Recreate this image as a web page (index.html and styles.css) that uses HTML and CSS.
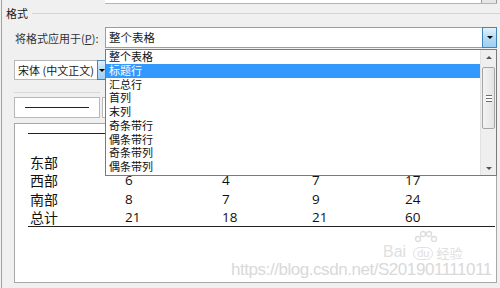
FILE: index.html
```html
<!DOCTYPE html>
<html lang="zh-CN">
<head>
    <meta charset="UTF-8">
    <title>格式</title>
    <link rel="stylesheet" href="styles.css">
</head>
<body>
    <div class="dialog">
        <div class="top-combo">
            <div class="top-combo-field"></div>
            <div class="top-combo-btn"></div>
        </div>

        <div class="section-title">
            <span>格式</span>
            <div class="section-line"></div>
        </div>

        <div class="apply-row">
            <label class="apply-label">将格式应用于(<u>P</u>):</label>
            <div class="combo-wrap">
                <div class="combo">
                    <div class="combo-text">整个表格</div>
                    <div class="drop-btn drop-btn-big"><span class="tri"></span></div>
                </div>
                <!-- 展开的下拉列表 -->
                <div class="drop-list">
                    <div class="drop-items">
                        <div class="drop-item">整个表格</div>
                        <div class="drop-item selected">标题行</div>
                        <div class="drop-item">汇总行</div>
                        <div class="drop-item">首列</div>
                        <div class="drop-item">末列</div>
                        <div class="drop-item">奇条带行</div>
                        <div class="drop-item">偶条带行</div>
                        <div class="drop-item">奇条带列</div>
                        <div class="drop-item">偶条带列</div>
                    </div>
                    <div class="scrollbar">
                        <div class="sb-arrow"><span class="tri-up"></span></div>
                        <div class="sb-thumb">
                            <span class="grip"></span>
                        </div>
                        <div class="sb-track"></div>
                        <div class="sb-arrow"><span class="tri-down"></span></div>
                    </div>
                </div>
            </div>
        </div>

        <div class="font-row">
            <div class="font-combo">宋体 (中文正文)</div>
            <div class="drop-btn drop-btn-small"><span class="tri"></span></div>
        </div>

        <div class="separator"></div>

        <div class="border-row">
            <div class="border-box"><div class="border-sample"></div></div>
            <div class="border-box2"></div>
        </div>

        <div class="preview">
            <div class="preview-table">
                <div class="row head-row"></div>
                <div class="row"><span>东部</span></div>
                <div class="row"><span>西部</span><span>6</span><span>4</span><span>7</span><span>17</span></div>
                <div class="row"><span>南部</span><span>8</span><span>7</span><span>9</span><span>24</span></div>
                <div class="row"><span>总计</span><span>21</span><span>18</span><span>21</span><span>60</span></div>
            </div>
            <div class="wm-baidu">
                <svg width="26" height="16" viewBox="0 0 26 16">
                    <circle cx="5" cy="9" r="2.5" fill="none" stroke="#dcdcdc" stroke-width="1.3"/>
                    <circle cx="10" cy="4" r="2.5" fill="none" stroke="#dcdcdc" stroke-width="1.3"/>
                    <circle cx="16" cy="4" r="2.5" fill="none" stroke="#dcdcdc" stroke-width="1.3"/>
                    <circle cx="21" cy="9" r="2.5" fill="none" stroke="#dcdcdc" stroke-width="1.3"/>
                </svg>
                <span class="wm-bai">Bai</span><span class="wm-du">du</span><span class="wm-jy">经验</span>
            </div>
            <div class="wm-url">https://blog.csdn.net/S201901111011</div>
        </div>
    </div>
</body>
</html>
```

FILE: styles.css
```css
body {
    margin: 0;
    width: 500px;
    height: 288px;
    overflow: hidden;
    background: #f0f0f0;
    font-family: "Noto Sans CJK SC", "Noto Sans", sans-serif;
    font-size: 11.5px;
    color: #1a1a1a;
}
.dialog {
    margin-left: 1px;
    height: 288px;
    border-left: 1px solid #a3a3a3;
}
.top-combo {
    display: flex;
    margin-left: 103px;
    width: 392px;
    height: 3px;
    border-bottom: 1px solid #b4b4b4;
}
.top-combo-field {
    flex: 1;
    background: #fff;
}
.top-combo-btn {
    width: 14px;
    background: #e6e6e6;
    border-left: 1px solid #9a9a9a;
    border-right: 1px solid #9a9a9a;
}
.section-title {
    display: flex;
    align-items: center;
    height: 17px;
    padding-left: 4px;
    font-size: 11px;
}
.section-line {
    flex: 1;
    height: 1px;
    margin-left: 4px;
    margin-top: 1px;
    background: #d5d5d5;
}
.apply-row {
    display: flex;
    align-items: center;
    margin-top: 6px;
    height: 21px;
}
.apply-label {
    width: 90px;
    padding-left: 13px;
    color: #333;
    font-size: 11px;
}
.combo-wrap {
    position: relative;
    z-index: 10;
    width: 392px;
}
.combo {
    display: flex;
    height: 21px;
    background: #fff;
    border: 1px solid #9c9c9c;
    box-sizing: border-box;
}
.combo-text {
    flex: 1;
    padding-left: 3px;
    line-height: 19px;
}
.drop-btn {
    display: flex;
    align-items: center;
    justify-content: center;
    background: linear-gradient(#e3f2fc, #b5dcf5 50%, #9fd0f2);
    border: 1px solid #3f86b9;
    box-sizing: border-box;
}
.drop-btn-big {
    width: 15px;
    margin: -1px -1px -1px 0;
    height: 21px;
}
.drop-btn-small {
    width: 9px;
    height: 20px;
}
.tri {
    width: 0;
    height: 0;
    border-left: 3px solid transparent;
    border-right: 3px solid transparent;
    border-top: 3px solid #000;
}
.drop-list {
    position: absolute;
    left: 0;
    top: 22px;
    width: 392px;
    height: 127px;
    display: flex;
    background: #fff;
    border: 1px solid #7a7a7a;
    box-sizing: border-box;
}
.drop-items {
    flex: 1;
}
.drop-item {
    height: 13.75px;
    line-height: 13.75px;
    padding-left: 3px;
    font-size: 11px;
    color: #111;
}
.drop-item.selected {
    background: #3399ff;
    color: #fff;
}
.scrollbar {
    width: 15px;
    display: flex;
    flex-direction: column;
    background: #efefef;
    border-left: 1px solid #e2e2e2;
}
.sb-arrow {
    height: 14px;
    display: flex;
    align-items: center;
    justify-content: center;
}
.tri-up, .tri-down {
    width: 0;
    height: 0;
    border-left: 3px solid transparent;
    border-right: 3px solid transparent;
}
.tri-up {
    border-bottom: 3px solid #555;
}
.tri-down {
    border-top: 3px solid #555;
}
.sb-thumb {
    height: 60px;
    margin: 3px 1px 0 1px;
    display: flex;
    align-items: center;
    justify-content: center;
    background: linear-gradient(90deg, #f3f3f3, #e4e4e4);
    border: 1px solid #a6a6a6;
    border-radius: 2px;
}
.grip {
    width: 6px;
    height: 5px;
    border-top: 1px solid #6e6e6e;
    border-bottom: 1px solid #6e6e6e;
    background: linear-gradient(#fff 0 2px, #6e6e6e 2px 3px, #fff 3px);
}
.sb-track {
    flex: 1;
}
.font-row {
    display: flex;
    margin-top: 12px;
    margin-left: 12px;
    height: 20px;
}
.font-combo {
    width: 83px;
    background: #fff;
    border: 1px solid #b8b8b8;
    border-right: none;
    padding-left: 3px;
    line-height: 18px;
    box-sizing: border-box;
    white-space: nowrap;
    font-size: 11px;
}
.separator {
    margin: 12px 0 0 12px;
    width: 86px;
    height: 1px;
    background: #d8d8d8;
}
.border-row {
    display: flex;
    margin-top: 4px;
    margin-left: 12px;
    height: 21px;
}
.border-box {
    width: 86px;
    display: flex;
    align-items: center;
    justify-content: center;
    background: #fff;
    border: 1px solid #b8b8b8;
    box-sizing: border-box;
}
.border-sample {
    width: 64px;
    height: 1px;
    background: #222;
}
.border-box2 {
    width: 10px;
    margin-left: 2px;
    background: #fff;
    border: 1px solid #b8b8b8;
}
.preview {
    position: relative;
    margin-top: 5px;
    margin-left: 12px;
    width: 483px;
    height: 160px;
    background: #fff;
    border: 1px solid #a8a8a8;
    box-sizing: border-box;
}
.preview-table {
    margin: 9px 0 0 13px;
    width: 467px;
    border-top: 1px solid #222;
    border-bottom: 1px solid #222;
}
.row {
    display: grid;
    grid-template-columns: 95px 97px 90px 93px 1fr;
    height: 18.3px;
    line-height: 18.3px;
    padding-left: 2px;
    font-family: "Open Sans", "Noto Sans CJK SC", sans-serif;
    font-size: 13.5px;
    color: #111;
}
.head-row {
    height: 19px;
}
.row span:first-child {
    font-family: "Noto Sans CJK SC", sans-serif;
    font-size: 14px;
}
.wm-baidu {
    position: absolute;
    left: 368px;
    top: 120px;
    display: flex;
    align-items: flex-end;
    color: #e0e0e0;
    font-family: "Liberation Sans", sans-serif;
    font-size: 16px;
    line-height: 16px;
}
.wm-baidu svg {
    position: absolute;
    left: 30px;
    top: -14px;
}
.wm-du {
    margin-left: 7px;
    padding: 0 3px;
    border: 1px solid #e0e0e0;
    border-radius: 7px;
    font-size: 11px;
    line-height: 11px;
}
.wm-jy {
    margin-left: 3px;
    font-family: "Noto Sans CJK SC", sans-serif;
    font-size: 13px;
    line-height: 14px;
}
.wm-url {
    position: absolute;
    left: 216px;
    top: 136px;
    color: #d9d9d9;
    font-family: "Liberation Sans", sans-serif;
    font-size: 17px;
    white-space: nowrap;
    letter-spacing: -0.45px;
}
```
